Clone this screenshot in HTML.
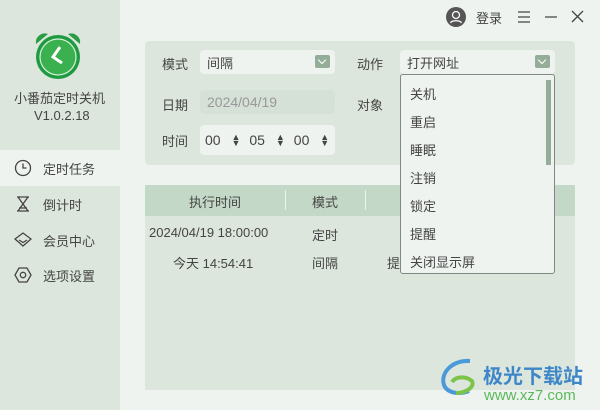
<!DOCTYPE html>
<html><head><meta charset="utf-8"><style>
*{margin:0;padding:0;box-sizing:border-box}
body{width:600px;height:410px;overflow:hidden;background:#eef3ef;font-family:"Liberation Sans","Noto Sans CJK SC",sans-serif;color:#444;font-size:13px;position:relative}
.abs{position:absolute}
.side{left:0;top:0;width:120px;height:410px;background:#dde6dd}
.nav{left:0;width:120px;height:36px;display:flex;align-items:center;padding-left:14px;font-size:13px;color:#444}
.nav svg{margin-right:11px}
.panel{left:145px;top:41px;width:430px;height:124px;background:#dde6dd;border-radius:4px}
.lbl{font-size:13px;color:#444}
.inp{background:#eef3ef;border-radius:4px;height:24px;display:flex;align-items:center;padding-left:7px;font-size:13px}
.dd{width:15px;height:13px;background:#93ad98;border-radius:2px;position:absolute;right:5px;top:5px}
.dd:after{content:"";position:absolute;left:4px;top:2px;width:5px;height:5px;border-right:1.3px solid #fff;border-bottom:1.3px solid #fff;transform:rotate(45deg)}
.tbl{left:145px;top:185px;width:430px;height:205px;background:#dde6dd}
.th{left:145px;top:185px;width:430px;height:31px;background:#c3d8c6}
.menu{left:400px;top:74px;width:155px;height:200px;background:#eef3ef;border:1px solid #7d8a84;border-radius:3px}
.mi{position:absolute;left:9px;font-size:13px;color:#444}
</style></head><body>
<div class="abs side"></div>
<svg class="abs" style="left:32px;top:30px" width="52" height="50" viewBox="0 0 52 50">
<path d="M4 14 A9 9 0 0 1 16 4 Z" fill="#2a9c45"/><path d="M48 14 A9 9 0 0 0 36 4 Z" fill="#2a9c45"/>
<circle cx="26" cy="27" r="22" fill="#1e9a40"/><circle cx="26" cy="27" r="18" fill="#3bb04f" stroke="#d8f0dc" stroke-width="1.2"/>
<path d="M28 17 L21 27 L30 33" stroke="#fff" stroke-width="3" fill="none"/></svg>
<div class="abs" style="left:14px;top:88px;font-size:13px">小番茄定时关机</div>
<div class="abs" style="left:34px;top:108px;font-size:13px">V1.0.2.18</div>
<div class="abs nav" style="top:150px;background:#eef3ef"><svg width="18" height="18"><circle cx="9" cy="9" r="7.5" fill="none" stroke="#444" stroke-width="1.3"/><path d="M9 4.5v4.5h3.5" stroke="#444" stroke-width="1.3" fill="none"/></svg>定时任务</div>
<div class="abs nav" style="top:186px"><svg width="18" height="18"><path d="M3 2h12M3 16h12M4 2l5 7-5 7M14 2l-5 7 5 7M5 13h8" stroke="#444" stroke-width="1.3" fill="none"/></svg>倒计时</div>
<div class="abs nav" style="top:222px"><svg width="18" height="18"><path d="M1 8l8-6 8 6-8 7z" stroke="#444" stroke-width="1.3" fill="none"/><path d="M5 9l4 2.5 4-2.5" stroke="#444" stroke-width="1.2" fill="none"/></svg>会员中心</div>
<div class="abs nav" style="top:257px"><svg width="18" height="18"><path d="M5 2h8l4 7-4 7H5L1 9z" stroke="#444" stroke-width="1.3" fill="none"/><circle cx="9" cy="9" r="2.7" fill="none" stroke="#444" stroke-width="1.3"/></svg>选项设置</div>

<svg class="abs" style="left:446px;top:7px" width="20" height="20"><circle cx="10" cy="10" r="10" fill="#555"/><circle cx="10" cy="8" r="3.5" fill="none" stroke="#fff" stroke-width="1.3"/><path d="M4.5 16c1-3 10-3 11 0" fill="none" stroke="#fff" stroke-width="1.3"/></svg>
<div class="abs" style="left:476px;top:8px;font-size:13px">登录</div>
<svg class="abs" style="left:516px;top:10px" width="70" height="14"><path d="M2 2h12M2 7h12M2 12h12M29 7h12M56 1l11 11M67 1L56 12" stroke="#444" stroke-width="1.3"/></svg>

<div class="abs panel"></div>
<div class="abs lbl" style="left:162px;top:54px">模式</div>
<div class="abs inp" style="left:200px;top:50px;width:135px">间隔<div class="dd"></div></div>
<div class="abs lbl" style="left:357px;top:54px">动作</div>
<div class="abs inp" style="left:400px;top:50px;width:155px">打开网址<div class="dd"></div></div>
<div class="abs lbl" style="left:162px;top:95px">日期</div>
<div class="abs inp" style="left:200px;top:90px;width:135px;background:#d5e0d7;color:#999;font-size:14px">2024/04/19</div>
<div class="abs lbl" style="left:357px;top:95px">对象</div>
<div class="abs lbl" style="left:162px;top:131px">时间</div>
<div class="abs inp" style="left:200px;top:125px;width:135px;height:30px;padding-left:5px;font-size:14px">00&nbsp;<span style="font-size:9px;line-height:6px;margin:0 9px 0 7px">▲<br>▼</span>05&nbsp;<span style="font-size:9px;line-height:6px;margin:0 9px 0 7px">▲<br>▼</span>00&nbsp;<span style="font-size:9px;line-height:6px;margin:0 0 0 7px">▲<br>▼</span></div>

<div class="abs tbl"></div>
<div class="abs th"></div>
<div class="abs" style="left:189px;top:192px">执行时间</div>
<div class="abs" style="left:285px;top:190px;width:1px;height:20px;background:#eef3ef"></div>
<div class="abs" style="left:312px;top:192px">模式</div>
<div class="abs" style="left:365px;top:190px;width:1px;height:20px;background:#eef3ef"></div>
<div class="abs" style="left:149px;top:225px">2024/04/19 18:00:00</div>
<div class="abs" style="left:312px;top:225px">定时</div>
<div class="abs" style="left:173px;top:253px">今天 14:54:41</div>
<div class="abs" style="left:312px;top:253px">间隔</div>
<div class="abs" style="left:387px;top:253px">提</div>

<div class="abs menu">
<div class="mi" style="top:9px">关机</div>
<div class="mi" style="top:37px">重启</div>
<div class="mi" style="top:65px">睡眠</div>
<div class="mi" style="top:93px">注销</div>
<div class="mi" style="top:121px">锁定</div>
<div class="mi" style="top:149px">提醒</div>
<div class="mi" style="top:177px">关闭显示屏</div>
<div style="position:absolute;left:145px;top:5px;width:5px;height:85px;background:#93ad98"></div>
</div>

<svg class="abs" style="left:440px;top:358px" width="42" height="40"><path d="M30 3C12 2 0 15 4 27c3 8 15 10 25 6" fill="none" stroke="#4a9ad8" stroke-width="4"/><path d="M12 24c4-6 14-6 20-1 3 6-6 12-16 12" fill="none" stroke="#7cc44a" stroke-width="4"/></svg>
<div class="abs" style="left:483px;top:360px;font-size:20px;font-weight:bold;color:#3d87c8">极光下载站</div>
<div class="abs" style="left:484px;top:387px;font-size:15px;color:#5cb85c">www.xz7.com</div>
</body></html>
